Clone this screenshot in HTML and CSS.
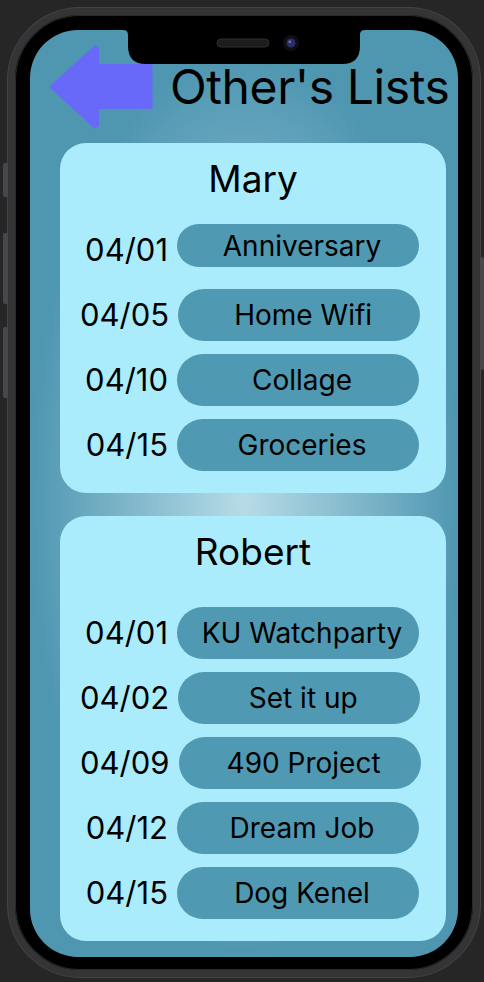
FILE: index.html
```html
<!DOCTYPE html>
<html lang="en">
<head>
<meta charset="utf-8">
<title>Other's Lists</title>
<link rel="stylesheet" href="styles.css">
</head>
<body>
<div class="device">
  <span class="side-btn side-btn--mute"></span>
  <span class="side-btn side-btn--vol-up"></span>
  <span class="side-btn side-btn--vol-down"></span>
  <span class="side-btn side-btn--power"></span>
  <div class="screen">
    <svg class="notch" viewBox="0 0 242 34" width="242" height="34" aria-hidden="true">
      <path d="M0,0 H242 C237,0 237,3 237,7 V16 Q237,34 219,34 H23 Q5,34 5,16 V7 C5,3 5,0 0,0 Z" fill="#000"/>
      <rect x="94" y="9" width="52" height="8" rx="4" fill="#1d1d1f" stroke="#2e2e30" stroke-width="1"/>
      <circle cx="168" cy="13" r="8" fill="#0e0e14"/>
      <circle cx="168" cy="13" r="4.5" fill="#2b2f63"/>
      <circle cx="166.8" cy="11.8" r="1.4" fill="#6c74b8"/>
    </svg>
    <header class="header">
      <svg class="back" viewBox="0 0 105 85" width="105" height="85" aria-hidden="true">
        <polygon points="3,43 47,3 49.5,5 49.5,21.5 103,21.5 103,63.5 49.5,63.5 49.5,81 47,83" fill="#6868f9" stroke="#6868f9" stroke-width="3" stroke-linejoin="round"/>
      </svg>
      <h1 class="title">Other's Lists</h1>
    </header>
    <main class="cards">
      <section class="card">
        <h2 class="name">Mary</h2>
        <ul class="list">
          <li class="row"><span class="date">04/01</span><span class="pill pill--short">Anniversary</span></li>
          <li class="row"><span class="date">04/05</span><span class="pill">Home Wifi</span></li>
          <li class="row"><span class="date">04/10</span><span class="pill">Collage</span></li>
          <li class="row"><span class="date">04/15</span><span class="pill">Groceries</span></li>
        </ul>
      </section>
      <section class="card">
        <h2 class="name">Robert</h2>
        <ul class="list list--loose">
          <li class="row"><span class="date">04/01</span><span class="pill">KU Watchparty</span></li>
          <li class="row"><span class="date">04/02</span><span class="pill">Set it up</span></li>
          <li class="row"><span class="date">04/09</span><span class="pill">490 Project</span></li>
          <li class="row"><span class="date">04/12</span><span class="pill">Dream Job</span></li>
          <li class="row"><span class="date">04/15</span><span class="pill">Dog Kenel</span></li>
        </ul>
      </section>
    </main>
  </div>
</div>
</body>
</html>
```
FILE: styles.css
```css
html, body {
  margin: 0;
  height: 100%;
}

body {
  background: #262626;
  padding: 8px 0 0 8px;
  box-sizing: border-box;
  font-family: Inter, "Noto Sans", sans-serif;
  color: #000;
  overflow: hidden;
}

.device {
  position: relative;
  width: 472px;
  height: 969px;
  box-sizing: border-box;
  border: 7px solid #343436;
  border-radius: 72px;
  background: #000;
  padding: 15px 15px 13px 15px;
  box-shadow: inset 0 0 0 1px #2a2a2c, 0 0 0 1px #444446;
}

.side-btn {
  position: absolute;
  width: 5px;
  background: #48484b;
  border-radius: 2px;
}

.side-btn--mute { left: -12px; top: 148px; height: 34px; }
.side-btn--vol-up { left: -12px; top: 218px; height: 71px; }
.side-btn--vol-down { left: -12px; top: 312px; height: 71px; }
.side-btn--power { right: -11px; width: 4px; top: 242px; height: 113px; }

.screen {
  position: relative;
  height: 100%;
  box-sizing: border-box;
  border-radius: 48px;
  overflow: hidden;
  padding: 14px 12px 0 18px;
  background: radial-gradient(ellipse 215px 450px at 50% 51%, #b7dce7 0%, #4f96b1 100%);
}

.notch {
  position: absolute;
  top: 0;
  left: 93px;
  display: block;
}

.header {
  display: flex;
  align-items: center;
  gap: 17px;
}

.back {
  display: block;
  flex: none;
}

.title {
  margin: 0;
  font-size: 48px;
  font-weight: 400;
  line-height: 58px;
  letter-spacing: -0.4px;
  white-space: nowrap;
}

.cards {
  display: flex;
  flex-direction: column;
  gap: 23px;
  margin-top: 14px;
  padding-left: 12px;
}

.card {
  background: #aaecfb;
  border-radius: 26px;
  padding: 13.5px 0 22px;
}

.name {
  margin: 0;
  text-align: center;
  font-size: 37px;
  font-weight: 400;
  line-height: 44px;
}

.list {
  list-style: none;
  margin: 23.5px 0 0;
  padding: 0 27px 0 20px;
  display: flex;
  flex-direction: column;
  gap: 13px;
}

.list--loose {
  margin-top: 33.5px;
}

.row {
  display: grid;
  grid-template-columns: 1fr 242px;
  column-gap: 9px;
  height: 52px;
  align-items: center;
}

.date {
  font-size: 31px;
  line-height: 38px;
  text-align: right;
  white-space: nowrap;
}

.pill {
  height: 52px;
  box-sizing: border-box;
  padding-left: 8px;
  border-radius: 26px;
  background: #4f9ab2;
  display: flex;
  align-items: center;
  justify-content: center;
  font-size: 28px;
  white-space: nowrap;
}

.pill--short {
  height: 43px;
  border-radius: 22px;
  align-self: start;
}
```
